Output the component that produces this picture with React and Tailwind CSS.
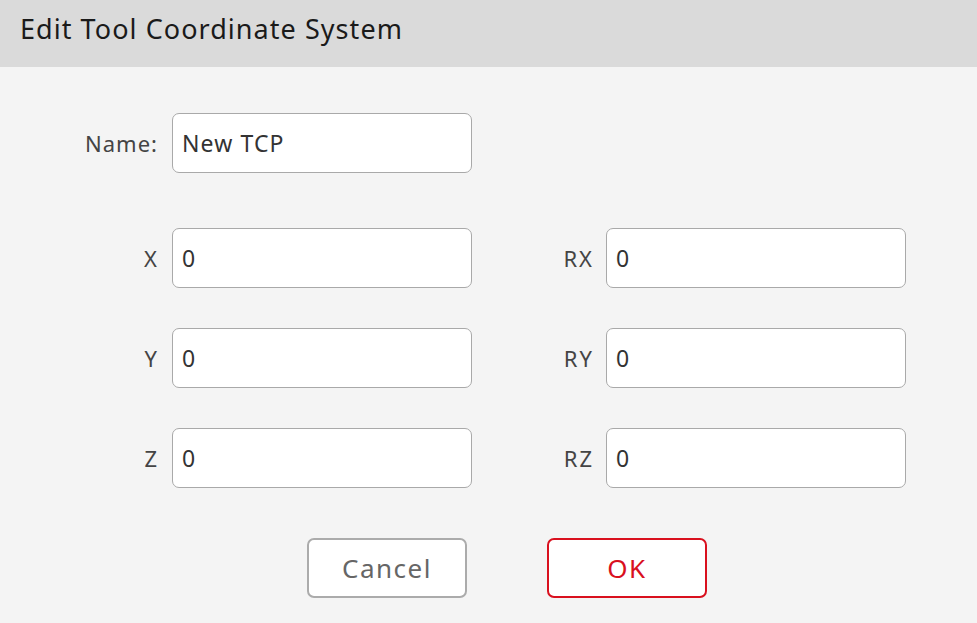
import React from "react";

function Field({ value }) {
  return (
    <div className="w-[300px] h-[60px] rounded-[7px] border border-[#a9a9a9] bg-white flex items-center pl-[9px] text-[23px] tracking-[1.1px] text-[#333]">
      {value}
    </div>
  );
}

function Row({ l1, l2 }) {
  return (
    <div className="flex items-center h-[60px]">
      <div className="w-[158px] text-right text-[22px] tracking-[1px] text-[#444]">{l1}</div>
      <div className="ml-[14px]"><Field value="0" /></div>
      <div className="w-[122px] text-right text-[22px] tracking-[2px] text-[#444]">{l2}</div>
      <div className="ml-[12px]"><Field value="0" /></div>
    </div>
  );
}

export default function App() {
  return (
    <div className="w-[977px] h-[623px] bg-[#f4f4f4] flex flex-col" style={{ fontFamily: '"Noto Sans", sans-serif' }}>
      <div className="h-[67px] bg-[#dadada] flex items-center pl-[20px] pb-[8px] text-[27px] tracking-[1.05px] text-[#1a1a1a]">
        Edit Tool Coordinate System
      </div>
      <div className="flex items-center h-[60px] mt-[46px]">
        <div className="w-[158px] text-right text-[22px] tracking-[1px] text-[#444]">Name:</div>
        <div className="ml-[14px]"><Field value="New TCP" /></div>
      </div>
      <div className="flex flex-col gap-[40px] mt-[55px]">
        <Row l1="X" l2="RX" />
        <Row l1="Y" l2="RY" />
        <Row l1="Z" l2="RZ" />
      </div>
      <div className="flex mt-[50px] pl-[307px] gap-[80px]">
        <button className="w-[160px] h-[60px] rounded-[7px] border-2 border-[#ababab] bg-white text-[26px] tracking-[1.5px] text-[#666]">Cancel</button>
        <button className="w-[160px] h-[60px] rounded-[7px] border-2 border-[#d9101e] bg-white text-[26px] tracking-[1.5px] text-[#d9101e]">OK</button>
      </div>
    </div>
  );
}
